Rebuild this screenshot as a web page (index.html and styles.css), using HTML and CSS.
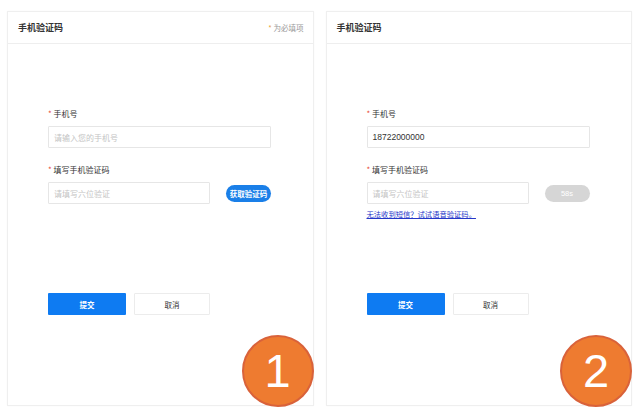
FILE: index.html
```html
<!DOCTYPE html>
<html lang="zh-CN">
<head>
<meta charset="utf-8">
<title>手机验证码</title>
<link rel="stylesheet" href="styles.css">
</head>
<body>
<div class="page">
  <section class="card">
    <header class="card-head">
      <h2 class="card-title">手机验证码</h2>
      <span class="req-note"><span class="note-star">*</span> 为必填项</span>
    </header>
    <div class="card-body">
      <div class="fields">
        <label class="label"><span class="star">*</span> 手机号</label>
        <div class="input input-wide placeholder">请输入您的手机号</div>
        <label class="label label-2"><span class="star">*</span> 填写手机验证码</label>
        <div class="code-row">
          <div class="input input-code placeholder">请填写六位验证</div>
          <span class="code-btn">获取验证码</span>
        </div>
      </div>
      <div class="actions">
        <span class="btn btn-primary">提交</span>
        <span class="btn btn-default">取消</span>
      </div>
    </div>
    <div class="step">1</div>
  </section>
  <section class="card">
    <header class="card-head">
      <h2 class="card-title">手机验证码</h2>
    </header>
    <div class="card-body">
      <div class="fields">
        <label class="label"><span class="star">*</span> 手机号</label>
        <div class="input input-wide value">18722000000</div>
        <label class="label label-2"><span class="star">*</span> 填写手机验证码</label>
        <div class="code-row">
          <div class="input input-code placeholder">请填写六位验证</div>
          <span class="code-btn code-btn-wait">58s</span>
        </div>
        <a class="voice-link" href="#">无法收到短信？试试语音验证码。</a>
      </div>
      <div class="actions">
        <span class="btn btn-primary">提交</span>
        <span class="btn btn-default">取消</span>
      </div>
    </div>
    <div class="step">2</div>
  </section>
</div>
</body>
</html>
```
FILE: styles.css
```css
* { box-sizing: border-box; }
html, body {
  margin: 0;
  padding: 0;
  background: #ffffff;
  font-family: "Noto Sans CJK SC", "Noto Sans", "Liberation Sans", sans-serif;
  color: #333;
}
.page {
  width: 640px;
  height: 415px;
  display: flex;
  gap: 12px;
  padding: 11px 8px 9px 7px;
}
.card {
  position: relative;
  flex: 1;
  border: 1px solid #efefef;
  background: #fff;
  box-shadow: 0 0 2px rgba(0,0,0,0.03);
}
.card-head {
  height: 32px;
  display: flex;
  align-items: center;
  justify-content: space-between;
  padding: 0 9px 0 10px;
  border-bottom: 1px solid #eeeeee;
}
.card-title {
  margin: 0;
  font-size: 9px;
  font-weight: 700;
  color: #333;
}
.req-note {
  font-size: 7.5px;
  color: #999;
}
.note-star { color: #e8a23a; }
.card-body {
  padding: 64px 0 0 40px;
}
.fields {
  height: 185px;
  display: flex;
  flex-direction: column;
  align-items: flex-start;
}
.label {
  display: block;
  height: 12px;
  line-height: 12px;
  font-size: 8px;
  color: #333;
  margin-bottom: 6px;
}
.label-2 { margin-top: 16px; }
.star { color: #e8473a; }
.input {
  height: 22px;
  border: 1px solid #e6e6e6;
  border-radius: 1px;
  padding: 0 5px;
  display: flex;
  align-items: center;
  font-size: 8px;
}
.input-wide { width: 223px; }
.input-code { width: 162px; }
.placeholder { color: #c4c4c4; }
.value { color: #333; font-size: 8.5px; font-family: "Liberation Sans", "Noto Sans CJK SC", sans-serif; }
.code-row {
  display: flex;
  align-items: center;
  gap: 16px;
}
.code-btn {
  width: 45px;
  height: 17px;
  border-radius: 9px;
  background: #1a7fe8;
  color: #fff;
  font-size: 7.5px;
  font-weight: 700;
  display: flex;
  align-items: center;
  justify-content: center;
  white-space: nowrap;
}
.code-btn-wait {
  background: #d6d6d6;
  font-weight: 400;
  font-family: "Liberation Sans", sans-serif;
}
.voice-link {
  margin-top: 5px;
  font-size: 7.3px;
  color: #2536c9;
  text-decoration: underline;
  line-height: 11px;
}
.actions {
  display: flex;
  gap: 8px;
}
.btn {
  height: 22px;
  display: flex;
  align-items: center;
  justify-content: center;
  font-size: 7.5px;
  border-radius: 1px;
}
.btn-primary {
  width: 78px;
  background: #0e7bf2;
  color: #fff;
  font-weight: 700;
}
.btn-default {
  width: 76px;
  border: 1px solid #ececec;
  color: #333;
}
.step {
  position: absolute;
  right: -1px;
  bottom: -2px;
  width: 72px;
  height: 72px;
  border-radius: 50%;
  background: #ee7b30;
  border: 2px solid #d9623a;
  color: #fff;
  font-family: "Liberation Sans", sans-serif;
  font-size: 47px;
  line-height: 68px;
  text-align: center;
}
```
